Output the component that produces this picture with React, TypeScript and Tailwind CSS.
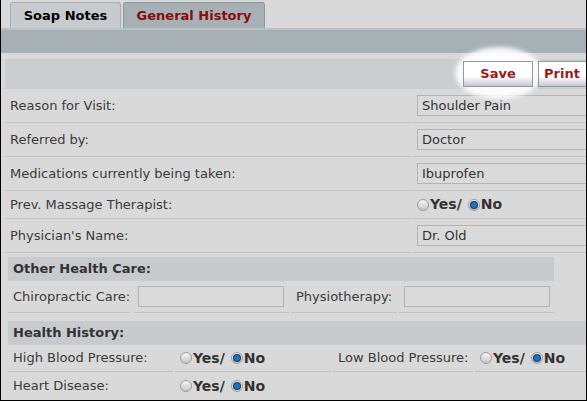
import React from "react";

function Radio({ checked }: { checked?: boolean }) {
  return (
    <span className="inline-flex h-[12px] w-[12px] shrink-0 items-center justify-center rounded-full border border-[#9a9a9a] bg-gradient-to-b from-[#f6f6f6] to-[#c6c6c6]">
      {checked && <span className="h-[6px] w-[6px] rounded-full bg-[#1c72bd] ring-1 ring-[#0e3f6a]" />}
    </span>
  );
}

function YesNo() {
  return (
    <span className="flex items-center text-[14px] font-bold text-[#333]">
      <Radio />
      <span className="ml-[1px]">Yes/</span>
      <span className="ml-[6px] flex items-center">
        <Radio checked />
        <span className="ml-[1px]">No</span>
      </span>
    </span>
  );
}

function Field({ label, children, tall = true }: { label: string; children: React.ReactNode; tall?: boolean }) {
  return (
    <div className={`flex ${tall ? "h-[34px]" : "h-[28px]"}`}>
      <div className="flex w-[407px] shrink-0 items-center border-b border-[#c3c3c3] pl-[5px]">{label}</div>
      <div className="ml-[1px] flex flex-1 items-center border-b border-[#c3c3c3] pl-[4px]">{children}</div>
    </div>
  );
}

function TextBox({ value, w = "w-[180px]" }: { value?: string; w?: string }) {
  return (
    <div className={`flex h-[21px] ${w} shrink-0 items-center border border-[#b4b4b4] bg-[#dadada] pl-[4px] text-[#333]`}>
      {value}
    </div>
  );
}

export default function App() {
  return (
    <div className="relative h-[401px] w-[587px] overflow-hidden border-b border-l border-r border-black bg-[#d9d9d9] font-['DejaVu_Sans',sans-serif] text-[13px] text-[#3a3a3a]">
      {/* tabs */}
      <div className="flex h-[28px] items-end gap-[2px] pl-[9px]">
        <div className="flex h-[26px] w-[111px] items-center justify-center rounded-t-[3px] border border-b-0 border-[#a9adb0] bg-[#c8cbce] font-bold text-black">
          Soap Notes
        </div>
        <div className="flex h-[26px] w-[142px] items-center justify-center rounded-t-[3px] border border-b-0 border-[#8e979b] bg-[#a7b1b5] font-bold text-[#8b0a0a]">
          General History
        </div>
      </div>
      <div className="h-[25px] border-t-2 border-[#bac2c5] bg-[#a7b1b5]" />

      <div className="ml-[4px] mt-[6px]">
        {/* action bar */}
        <div className="relative flex h-[30px] items-center justify-end gap-[5px] bg-[#caced1]">
          <div className="absolute left-[450px] top-[-12px] h-[52px] w-[88px] rounded-[50%] bg-white/90 blur-[2px]" />
          <button className="relative flex h-[26px] w-[70px] items-center justify-center border border-[#8f9aa0] bg-gradient-to-b from-white from-60% to-[#c4c8d2] font-bold text-[#a01818]">
            Save
          </button>
          <button className="relative -mr-[3px] flex h-[26px] w-[51px] items-center justify-start border border-r-0 border-[#8f9aa0] bg-gradient-to-b from-white from-60% to-[#c4c8d2] pl-[5px] font-bold text-[#a01818]">
            Print
          </button>
        </div>

        <Field label="Reason for Visit:">
          <TextBox value="Shoulder Pain" />
        </Field>
        <Field label="Referred by:">
          <TextBox value="Doctor" />
        </Field>
        <Field label="Medications currently being taken:">
          <TextBox value="Ibuprofen" />
        </Field>
        <Field label="Prev. Massage Therapist:" tall={false}>
          <YesNo />
        </Field>
        <Field label="Physician's Name:">
          <TextBox value="Dr. Old" />
        </Field>

        {/* Other Health Care */}
        <div className="ml-[3px] mt-[4px] w-[546px]">
          <div className="flex h-[24px] items-center bg-[#c8cbce] pl-[5px] font-bold text-[#333]">Other Health Care:</div>
          <div className="flex h-[32px]">
            <div className="flex w-[123px] shrink-0 items-center border-b border-[#c3c3c3] pl-[5px]">Chiropractic Care:</div>
            <div className="ml-[3px] flex w-[155px] shrink-0 items-center border-b border-[#c3c3c3] pl-[4px]">
              <TextBox w="w-[146px]" />
            </div>
            <div className="ml-[2px] flex w-[106px] shrink-0 items-center border-b border-[#c3c3c3] pl-[5px]">Physiotherapy:</div>
            <div className="ml-[2px] flex flex-1 items-center border-b border-[#c3c3c3] pl-[5px]">
              <TextBox w="w-[146px]" />
            </div>
          </div>
        </div>

        {/* Health History */}
        <div className="ml-[3px] mt-[8px]">
          <div className="flex h-[24px] items-center bg-[#c8cbce] pl-[5px] font-bold text-[#333]">Health History:</div>
          <div className="flex h-[27px]">
            <div className="flex w-[165px] shrink-0 items-center border-b border-[#c3c3c3] pl-[5px]">High Blood Pressure:</div>
            <div className="ml-[2px] flex w-[156px] shrink-0 items-center border-b border-[#c3c3c3] pl-[5px]">
              <YesNo />
            </div>
            <div className="ml-[2px] flex w-[140px] shrink-0 items-center border-b border-[#c3c3c3] pl-[5px]">Low Blood Pressure:</div>
            <div className="ml-[2px] flex flex-1 items-center border-b border-[#c3c3c3] pl-[5px]">
              <YesNo />
            </div>
          </div>
          <div className="flex h-[28px]">
            <div className="flex w-[165px] shrink-0 items-center pl-[5px]">Heart Disease:</div>
            <div className="ml-[2px] flex w-[156px] shrink-0 items-center pl-[5px]">
              <YesNo />
            </div>
          </div>
        </div>
      </div>
    </div>
  );
}
